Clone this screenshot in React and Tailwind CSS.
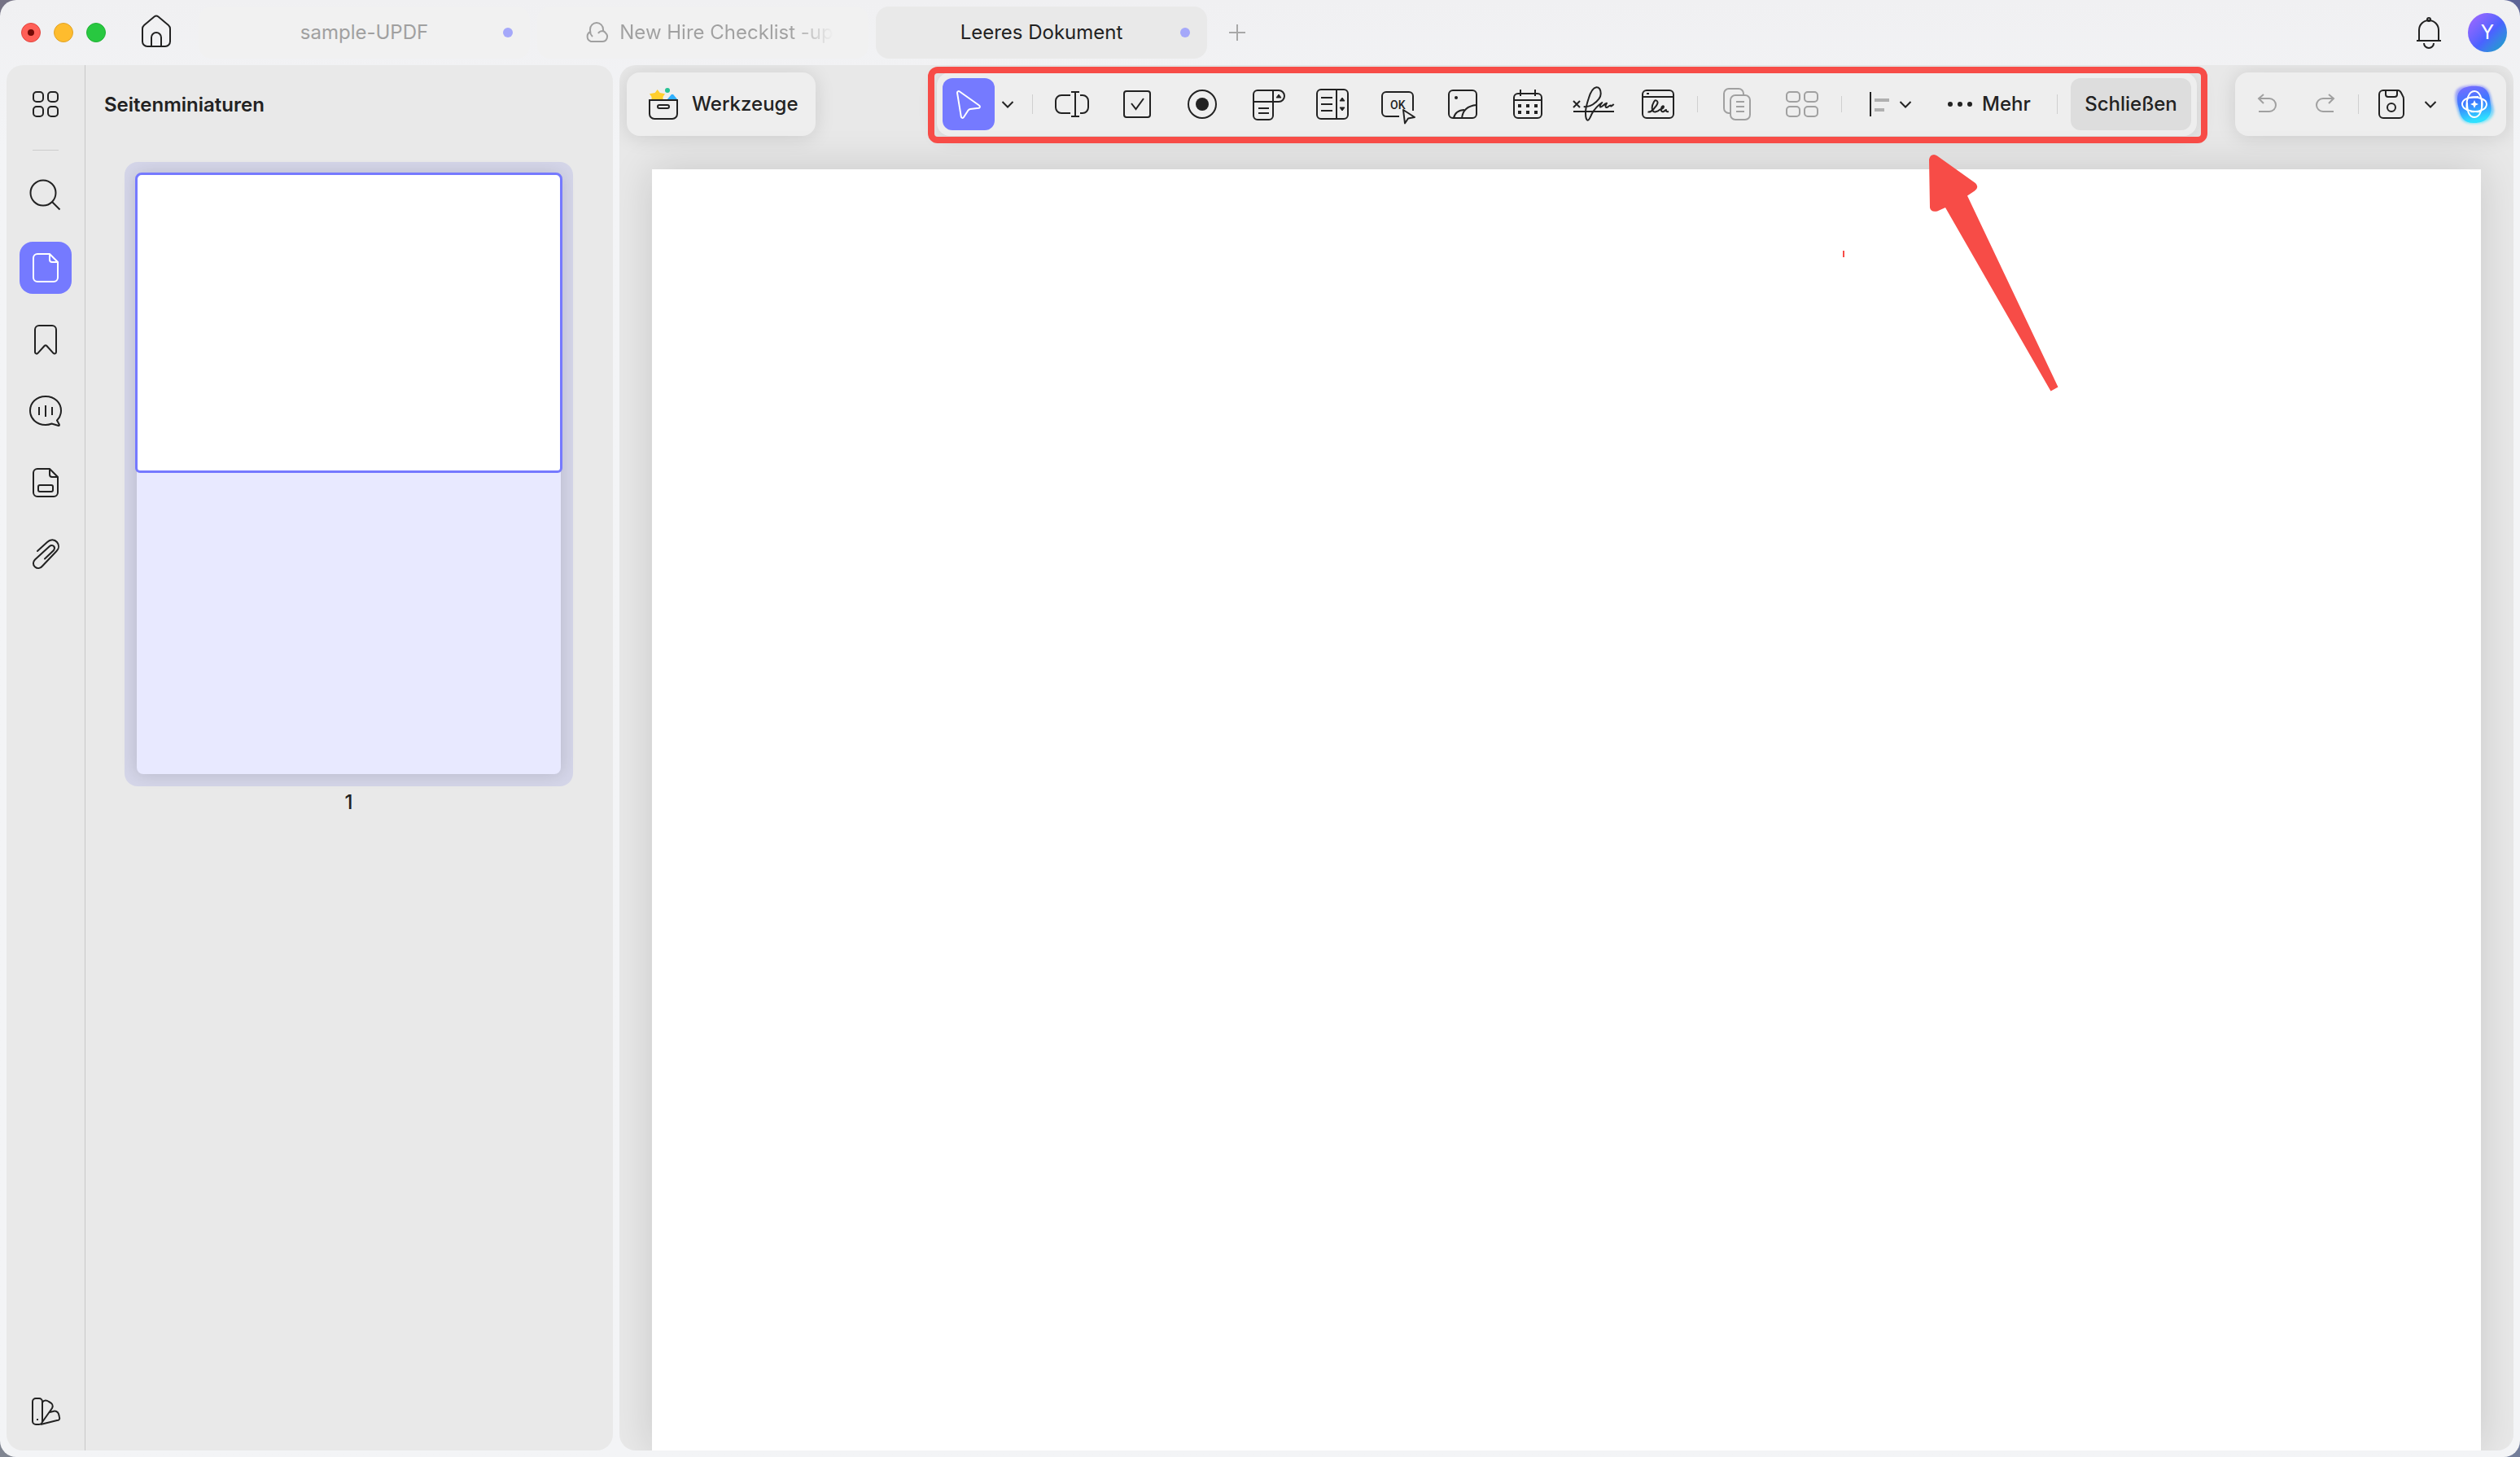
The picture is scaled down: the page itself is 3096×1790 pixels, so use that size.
import React from 'react';

const Icon = ({ children, className = '', size = 48, strokeWidth = 2 }) => (
  <svg
    width={size}
    height={size}
    viewBox={`0 0 ${size} ${size}`}
    fill="none"
    stroke="currentColor"
    strokeWidth={strokeWidth}
    className={`shrink-0 overflow-visible ${className}`}
    aria-hidden="true"
  >
    {children}
  </svg>
);

const Chevron = () => (
  <Icon size={16} className="text-[#222222]">
    <path d="M1.5 5l6.5 6.5L14.5 5" />
  </Icon>
);

const Divider = ({ className = '' }) => <div className={`w-px bg-[#cfcfcf] shrink-0 ${className}`} />;

/* Left rail, one button per side panel */
const railItems = [
  {
    label: 'Suchen',
    icon: (
      <Icon>
        <circle cx="21" cy="20" r="15.500" />
        <path d="M32 31l9.500 9.500" />
      </Icon>
    ),
  },
  {
    label: 'Seitenminiaturen',
    active: true,
    icon: (
      <Icon>
        <path d="M29 7H14a5 5 0 0 0-5 5v24a5 5 0 0 0 5 5h20a5 5 0 0 0 5-5V17L29 7z" strokeLinejoin="round" />
        <path d="M29 7v7a3 3 0 0 0 3 3h7" />
      </Icon>
    ),
  },
  {
    label: 'Lesezeichen',
    icon: (
      <Icon>
        <path d="M11 12a5 5 0 0 1 5-5h16a5 5 0 0 1 5 5v27.500a2 2 0 0 1-3.500 1.400L25.500 32a2 2 0 0 0-3 0L14.500 40.900A2 2 0 0 1 11 39.500z" />
      </Icon>
    ),
  },
  {
    label: 'Kommentare',
    icon: (
      <Icon>
        <path
          d="M24 6C13 6 5 13.500 5 23.500S13 41 24 41c3 0 5-.5 7.500-1.500L40 42c1 0 1-1 .7-1.700L38 35.500c3.500-3.500 5-7.500 5-12C43 13.500 35 6 24 6z"
          strokeLinejoin="round"
        />
        <path d="M16 19v10M24 17v14M32 19v10" />
      </Icon>
    ),
  },
  {
    label: 'Felder',
    icon: (
      <Icon>
        <path d="M29 7H14a5 5 0 0 0-5 5v24a5 5 0 0 0 5 5h20a5 5 0 0 0 5-5V17L29 7z" strokeLinejoin="round" />
        <path d="M29 7v7a3 3 0 0 0 3 3h7" />
        <rect x="15" y="27" width="18" height="8" rx="2" />
      </Icon>
    ),
  },
  {
    label: 'Anhänge',
    icon: (
      <Icon>
        <path
          d="M14 20L26 9c4-4 9-3.500 12 0 3 3.500 2.500 8-.5 11L20 38.500c-2.500 3-6 3.500-9 1s-2.500-6.500 0-9L29 14c1.500-1.500 4-1.500 5 0 1.500 1.500 1 3.500 0 5L23 29.500"
          strokeLinecap="round"
        />
      </Icon>
    ),
  },
];

/* Form field tools */
const formTools = [
  {
    label: 'Textfeld',
    icon: (
      <Icon>
        <path d="M22 13H11a7 7 0 0 0-7 7v8a7 7 0 0 0 7 7h11" />
        <path d="M34 13h3a7 7 0 0 1 7 7v8a7 7 0 0 1-7 7h-3" />
        <path d="M28 9v30M23 9h10M23 39h10" />
      </Icon>
    ),
  },
  {
    label: 'Kontrollkästchen',
    icon: (
      <Icon>
        <rect x="8" y="8" width="32" height="32" rx="3" />
        <path d="M17 23l5.500 7L32 17" />
      </Icon>
    ),
  },
  {
    label: 'Optionsfeld',
    icon: (
      <Icon>
        <circle cx="24" cy="24" r="17" />
        <circle cx="24" cy="24" r="8" fill="currentColor" stroke="none" />
      </Icon>
    ),
  },
  {
    label: 'Dropdown',
    icon: (
      <Icon>
        <path d="M31 7H12a5 5 0 0 0-5 5v26a5 5 0 0 0 5 5h14a5 5 0 0 0 5-5V7h7a7 7 0 0 1 0 14H7" />
        <path d="M13 29h13M13 35h13" />
        <path d="M35 16l3-4 3 4z" fill="currentColor" strokeWidth="1" />
      </Icon>
    ),
  },
  {
    label: 'Listenfeld',
    icon: (
      <Icon>
        <rect x="5" y="6" width="38" height="36" rx="5" />
        <path d="M29 6v36M10 16h14M10 24h14M10 32h14" />
        <path d="M33 20l3-4 3 4zM33 28l3 4 3-4z" fill="currentColor" strokeWidth="1" />
      </Icon>
    ),
  },
  {
    label: 'Schaltfläche',
    icon: (
      <Icon>
        <path d="M43 32V14a5 5 0 0 0-5-5H10a5 5 0 0 0-5 5v20a5 5 0 0 0 5 5h16" />
        <text x="15" y="30" fontSize="14" fontWeight="500" fontFamily="Roboto, sans-serif" fill="currentColor" stroke="none">
          OK
        </text>
        <path d="M31 31l14 9-8 1.500-4 6z" strokeLinejoin="round" fill="#eeeeee" />
      </Icon>
    ),
  },
  {
    label: 'Bild',
    icon: (
      <Icon>
        <rect x="7" y="7" width="34" height="34" rx="5" />
        <circle cx="16" cy="16" r="2" fill="currentColor" stroke="none" />
        <path d="M41 25c-11 1-17 7-18 16M26 31c-7 0-12 4-13 10" />
      </Icon>
    ),
  },
  {
    label: 'Datum',
    icon: (
      <Icon>
        <rect x="7" y="11" width="34" height="30" rx="5" />
        <path d="M7 19h34M15 6v8M33 6v8" />
        <path d="M12 26h4M22 26h4M32 26h4M12 34h4M22 34h4M32 34h4" strokeWidth="4" />
      </Icon>
    ),
  },
  {
    label: 'Unterschrift',
    icon: (
      <Icon>
        <path d="M0 20l8 8M8 20l-8 8M0 33h50" />
        <path
          d="M12.700 27c4 .5 8-.5 11-2.500 6-4 10-8 10-13.500 0-5-2-8-5.500-7.700-5 .7-7.500 7-9.500 13.700-2 6-4 12-3.700 18.300 0 5 1 8.500 2.700 8.400 2-.2 3.300-4.700 5.300-8.400 3-5.300 7-9.800 12.300-13.300-2 2.500-3 4.500-2.300 5.500 1.500 1 4.500-3.800 8-4.800-1.500 2.500-2.200 4.500-.7 5.300 2 .7 3.700-3 5.700-2.500-.5 1.500.5 1.500 3.700-1.500"
          strokeLinejoin="round"
        />
      </Icon>
    ),
  },
  {
    label: 'Unterschriftsfeld',
    icon: (
      <Icon>
        <rect x="5" y="7" width="38" height="34" rx="5" />
        <path d="M5 15h38M10 11h3" />
        <path
          d="M11.500 33.500c3 .5 4.500-.5 7-3.500 3-3.500 5.500-6 5-8.500-.5-2.500-3-3-4.500-.5-2 3.500-3 8-1.500 11 1.500 3 6 1 9-1.500 2.500-.5 4.500-2 4.500-3.500s-2.500-.5-3 2c-.7 3 .5 5 3 4 1-.5 2-2 3-2-.5 2 1 2.500 3 2"
          strokeLinejoin="round"
        />
      </Icon>
    ),
  },
];

const Tab = ({ title, icon, modified, active }) => (
  <div
    className={`relative flex h-16 w-[407px] shrink-0 items-center justify-center rounded-2xl font-normal ${
      active ? 'bg-[#e9e9e9] text-[#222222]' : 'bg-[#f1f1f1] text-[#a0a0a0]'
    }`}
  >
    <button type="button" className={`flex items-center gap-[14px] whitespace-nowrap ${icon ? 'pl-4' : ''}`}>
      {icon}
      {title}
    </button>
    {modified && <span className="absolute right-[21px] size-3 rounded-full bg-[#a5a8fa]" />}
  </div>
);

const CloudIcon = () => (
  <Icon size={28}>
    <path d="M7 25h14a6 6 0 0 0 4-10.500C24 13 23 12.500 22 12V10a8 8 0 0 0-16 0c0 1 0 2 .3 3A6.500 6.500 0 0 0 7 25zM6 13c0 3 1 4 3 6M22 12c-3 0-5 1-6 3" />
  </Icon>
);

const TitleBar = () => (
  <header className="flex h-20 shrink-0 items-center pl-[26px] pr-4">
    <div className="flex gap-4">
      <button
        type="button"
        aria-label="Fenster schließen"
        className="flex size-6 items-center justify-center rounded-full border border-[#e2463f] bg-[#ff5f57]"
      >
        <span className="size-2 rounded-full bg-[#730a06]" />
      </button>
      <button type="button" aria-label="Minimieren" className="size-6 rounded-full border border-[#e1a325] bg-[#febc2e]" />
      <button type="button" aria-label="Vollbild" className="size-6 rounded-full border border-[#23b236] bg-[#28c840]" />
    </div>
    <button type="button" aria-label="Startseite" className="ml-[38px] text-[#222222]">
      <Icon>
        <path d="M7 19.500c0-2 .6-3.300 2-4.500L21.500 4.500a4 4 0 0 1 5 0L39 15c1.400 1.200 2 2.500 2 4.500V35a6 6 0 0 1-6 6H13a6 6 0 0 1-6-6z" />
        <path d="M18 41V30a6 6 0 0 1 12 0v11" />
      </Icon>
    </button>
    <nav className="ml-7 flex gap-[9px]">
      <Tab title="sample-UPDF" modified />
      <Tab
        icon={<CloudIcon />}
        title={
          <span className="bg-gradient-to-r from-[#a0a0a0] from-80% to-transparent bg-clip-text text-transparent">
            New Hire Checklist -up
          </span>
        }
      />
      <Tab title="Leeres Dokument" modified active />
    </nav>
    <button type="button" aria-label="Neuer Tab" className="ml-[27px] text-[#a8a8a8]">
      <Icon size={20}>
        <path d="M10 0v20M0 10h20" />
      </Icon>
    </button>
    <button type="button" aria-label="Benachrichtigungen" className="ml-auto text-[#222222]">
      <Icon>
        <path d="M12 34V21a12 12 0 0 1 24 0v13M9 34h30" />
        <circle cx="24" cy="8" r="2" />
        <path d="M18 37a6 6 0 0 0 12 0" />
      </Icon>
    </button>
    <button
      type="button"
      className="ml-6 size-12 rounded-full bg-gradient-to-br from-[#a666ff] via-[#4a62ff] via-55% to-[#00a8bd] text-2xl font-normal text-white"
    >
      Y
    </button>
  </header>
);

const SidePanel = () => (
  <aside className="flex w-[745px] shrink-0 rounded-[20px] bg-[#e9e9e9] text-[#222222]">
    <div className="flex w-[97px] flex-col items-center border-r border-[#c9c9c9] pt-4 pb-4">
      <button type="button" aria-label="Übersicht" className="flex size-16 items-center justify-center">
        <Icon>
          <rect x="9" y="9" width="12" height="12" rx="4" />
          <rect x="27" y="9" width="12" height="12" rx="4" />
          <rect x="9" y="27" width="12" height="12" rx="4" />
          <rect x="27" y="27" width="12" height="12" rx="4" />
        </Icon>
      </button>
      <div className="mt-6 h-px w-8 bg-[#cccccc]" />
      <div className="mt-6 flex flex-col gap-6">
        {railItems.map((item) => (
          <button
            key={item.label}
            type="button"
            aria-label={item.label}
            className={`flex size-16 items-center justify-center rounded-2xl ${item.active ? 'bg-[#757aff] text-white' : ''}`}
          >
            {item.icon}
          </button>
        ))}
      </div>
      <button type="button" aria-label="Design" className="mt-auto flex size-16 items-center justify-center">
        <Icon>
          <rect x="8" y="8" width="12" height="32" rx="4" />
          <path d="M20 13c2-3 5-3 8-1 4 2 6 4 4 8L20 37M29 25l4-1c3-1 6 0 7 3l1 4c1 3-1 4-3 4L18 40" />
          <path d="M13 34h2" />
        </Icon>
      </button>
    </div>
    <div className="flex flex-1 flex-col">
      <h2 className="pl-[23px] pt-[33px] text-2xl leading-8 font-semibold">Seitenminiaturen</h2>
      <figure className="mt-[54px] ml-12 w-[551px]">
        <div className="rounded-2xl bg-[#d4d5e8] p-[15px]">
          <div className="relative h-[737px] rounded-lg bg-[#e8e9ff] shadow-[0_0_20px_rgba(0,0,0,0.14)]">
            <div className="absolute -inset-x-[2px] -top-[2px] h-[369px] rounded-lg rounded-b-md border-[3px] border-[#7579ff] bg-white" />
          </div>
        </div>
        <figcaption className="mt-1 text-center text-2xl leading-8">1</figcaption>
      </figure>
    </div>
  </aside>
);

const card = 'flex h-[78px] items-center rounded-2xl bg-[#eeeeee] shadow-[0_2px_24px_rgba(0,0,0,0.12)]';

const FormToolbar = () => (
  <div className={`${card} ml-auto mr-[47px] px-[7px]`}>
    <button type="button" aria-label="Auswählen" className="flex size-16 items-center justify-center rounded-xl bg-[#757aff] text-white">
      <Icon>
        <path d="M10 10c0-1.500 1.500-2.500 3-1.500l24 17c1.500 1 1 3-.7 3.300L26 30c-1 .2-2 .7-2.500 1.500L18 40c-1 1.500-3 1-3.200-.7z" />
      </Icon>
    </button>
    <button type="button" aria-label="Auswahlmodus" className="flex h-16 w-8 items-center justify-center">
      <Chevron />
    </button>
    <Divider className="ml-[14px] mr-2 h-6" />
    {formTools.map((tool) => (
      <button key={tool.label} type="button" aria-label={tool.label} className="flex h-16 w-20 items-center justify-center">
        {tool.icon}
      </button>
    ))}
    <Divider className="mx-2 h-5" />
    <button type="button" aria-label="Duplizieren" className="flex h-16 w-20 items-center justify-center text-[#a0a0a0]">
      <Icon>
        <path d="M15 35h-1a6 6 0 0 1-6-6V11a6 6 0 0 1 6-6h12a6 6 0 0 1 6 6v2" />
        <rect x="16" y="13" width="24" height="30" rx="6" />
        <path d="M23 21h10M23 27h10M23 33h10" />
      </Icon>
    </button>
    <button type="button" aria-label="Anordnen" className="flex h-16 w-20 items-center justify-center text-[#a0a0a0]">
      <Icon>
        <rect x="5" y="9" width="16" height="12" rx="4" />
        <rect x="27" y="9" width="16" height="12" rx="4" />
        <rect x="5" y="27" width="16" height="12" rx="4" />
        <rect x="27" y="27" width="16" height="12" rx="4" />
      </Icon>
    </button>
    <Divider className="ml-2 mr-[22px] h-5" />
    <button type="button" aria-label="Ausrichten" className="flex h-16 items-center">
      <Icon>
        <path d="M13 9v30" />
        <path d="M18 19h18M18 31h12" stroke="#b0b0b0" strokeWidth="4" />
      </Icon>
      <Chevron />
    </button>
    <button type="button" className="ml-[42px] flex w-[104px] items-center gap-3 whitespace-nowrap">
      <Icon size={32}>
        <path d="M5 16h0M17 16h0M29 16h0" strokeWidth="6" strokeLinecap="round" />
      </Icon>
      Mehr
    </button>
    <Divider className="ml-8 mr-4 h-6" />
    <button type="button" className="h-16 w-[148px] rounded-xl bg-[#dddddd]">
      Schließen
    </button>
  </div>
);

const AiLogo = () => (
  <svg width="50" height="50" viewBox="0 0 50 50" className="shrink-0 overflow-visible" aria-hidden="true">
    <defs>
      <linearGradient id="ai" x1="0" y1="0" x2="0.200" y2="1">
        <stop offset="0" stopColor="#7d6bff" />
        <stop offset="0.500" stopColor="#3c78ff" />
        <stop offset="1" stopColor="#2ee0ff" />
      </linearGradient>
      <filter id="soft">
        <feGaussianBlur stdDeviation="1.500" />
      </filter>
    </defs>
    <path
      d="M2 10C4 2 20 1 31 2c9 1 13 6 15 17 1 7 5 12 2 19-4 8-12 11-24 11C10 49 7 43 4 31 2 23 0 17 2 10z"
      fill="url(#ai)"
      opacity="0.600"
      filter="url(#soft)"
    />
    <path d="M5 12C8 4 20 2 29 3c9 1 14 6 15 16 1 8 3 12 0 19-4 7-10 10-20 10C12 48 8 41 6 31 4 23 3 18 5 12z" fill="url(#ai)" />
    <g fill="none" stroke="#fff" strokeWidth="2">
      <path d="M16 33C14 20 18 9 25 9c6 0 10 8 9 20" />
      <path d="M17 17c13-2 23 2 23 8 0 6-8 10-20 9" />
      <path d="M34 18c2 12-2 23-9 23-6 0-9-7-9-18" />
      <path d="M33 34C20 35 10 31 10 25c0-6 8-9 20-9" />
    </g>
    <path d="M25 20l1.500 3.500L30 25l-3.500 1.500L25 30l-1.500-3.500L20 25l3.500-1.500z" fill="#fff" />
  </svg>
);

const DocumentActions = () => (
  <div className={`${card} mr-[9px] px-[14px] text-[#222222]`}>
    <button type="button" aria-label="Rückgängig" className="text-[#a0a0a0]">
      <Icon>
        <path d="M15 33h13a8 8 0 0 0 0-16H15M21 12l-6 5 6 6" />
      </Icon>
    </button>
    <button type="button" aria-label="Wiederholen" className="ml-6 text-[#a0a0a0]">
      <Icon>
        <path d="M35 33H22a8 8 0 0 1 0-16h13M29 12l6 5-6 6" />
      </Icon>
    </button>
    <Divider className="ml-[17px] mr-4 h-6" />
    <button type="button" aria-label="Speichern" className="flex items-center">
      <Icon>
        <path d="M14 7h18c2 0 3 1 4 3l2 4c1 1 1 2 1 4v18a5 5 0 0 1-5 5H14a5 5 0 0 1-5-5V12a5 5 0 0 1 5-5z" />
        <path d="M17 7v5a3 3 0 0 0 3 3h8a3 3 0 0 0 3-3V7" />
        <circle cx="24" cy="28" r="5" />
      </Icon>
    </button>
    <button type="button" aria-label="Speicheroptionen" className="ml-4">
      <Chevron />
    </button>
    <button type="button" aria-label="UPDF AI" className="ml-[21px]">
      <AiLogo />
    </button>
  </div>
);

const App = () => {
  return (
    <div className="relative h-screen overflow-hidden bg-[conic-gradient(from_0deg,#454a93,#8a979d,#6b6078)] font-[Inter,sans-serif] text-2xl font-medium text-[#222222]">
      <div className="flex h-full flex-col rounded-[20px] bg-gradient-to-b from-[#f0f0f2] to-[#f3f4f6] to-10%">
        <TitleBar />
        <div className="flex min-h-0 flex-1 gap-2 px-2 pb-2">
          <SidePanel />
          <main className="flex min-w-0 flex-1 flex-col overflow-hidden rounded-[20px] bg-[#e8e8e8] pt-[9px]">
            <div className="flex items-center">
              <button type="button" className={`${card} ml-[9px] w-[232px] gap-4 pl-[26px]`}>
                <Icon size={38}>
                  <g stroke="none">
                    <path
                      d="M11.700 1l3 4 6.300 1.300-2.500 3.700V14H4.500v-4L2 6.300 8.700 5z"
                      fill="#ffcf2e"
                    />
                    <circle cx="24" cy="2" r="3" fill="#27c294" />
                    <path d="M28.500 7.500q1.500-1.500 3 0L37 14H23z" fill="#2fb0ff" />
                  </g>
                  <path d="M2 14h34v17a6 6 0 0 1-6 6H8a6 6 0 0 1-6-6z" fill="#eeeeee" />
                  <rect x="12" y="20" width="14" height="4" rx="2" />
                </Icon>
                Werkzeuge
              </button>
              <FormToolbar />
              <DocumentActions />
            </div>
            <div className="mx-10 mt-[41px] flex-1 bg-white shadow-[0_0_48px_rgba(0,0,0,0.14)]" />
          </main>
        </div>
      </div>

      {/* Markup on top of the window */}
      <div className="pointer-events-none absolute top-[82px] right-[384px] h-[94px] w-[1572px] rounded-xl border-8 border-[#f74c47]" />
      <svg
        className="pointer-events-none absolute top-[188px] right-[566px]"
        width="162"
        height="294"
        viewBox="0 0 162 294"
        fill="#f74c47"
        aria-hidden="true"
      >
        <path d="M2 8Q3 2 8 2q2 0 4 1.500L59 37q5 5-1 9.500l-9 6L160.500 287.500l-9 5L22 67l-10 4.500Q4 73 3 67z" />
      </svg>
      <div className="pointer-events-none absolute top-[308px] right-[830px] h-2 w-[2px] bg-[#f74c47]" />
    </div>
  );
};

export default App;
